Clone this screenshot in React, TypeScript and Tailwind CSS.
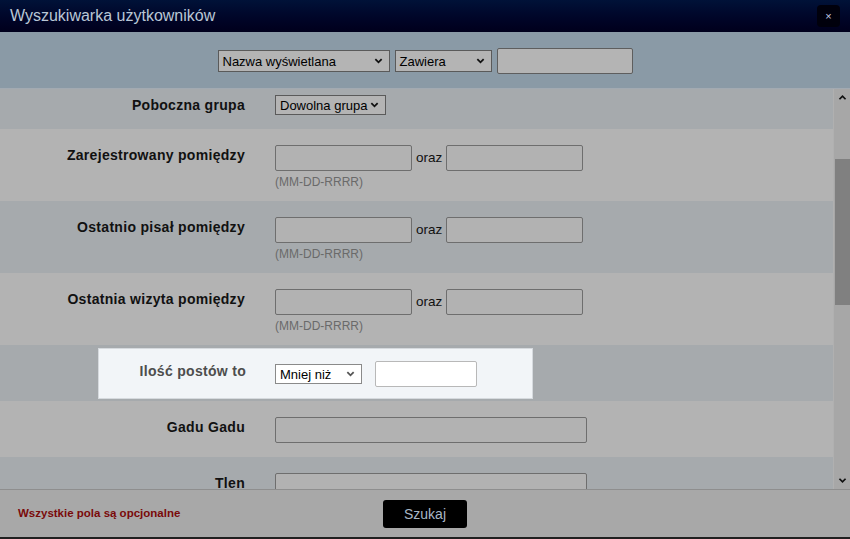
import React from 'react';

const font = { fontFamily: '"Liberation Sans", Arial, sans-serif' };

const Chevron: React.FC<{ className?: string }> = ({ className }) => (
  <svg viewBox="0 0 10 8" className={className} fill="none" stroke="currentColor" strokeWidth="2">
    <path d="M1.5 2l3.5 3.5L8.5 2" />
  </svg>
);

const Select: React.FC<{ label: string; className: string; light?: boolean }> = ({ label, className, light }) => (
  <div
    className={`flex items-center justify-between whitespace-nowrap border pl-1 pr-1.5 text-[13px] ${
      light ? 'bg-white border-[#8a8a8a] text-black' : 'bg-[#b4b4b4] border-[#5a5a5a] text-black'
    } ${className}`}
  >
    <span className="leading-none">{label}</span>
    <Chevron className={`w-[9px] h-[8px] shrink-0 ${light ? 'text-[#555]' : 'text-[#111]'}`} />
  </div>
);

const TextBox: React.FC<{ className: string }> = ({ className }) => (
  <div className={`h-[26px] border border-[#6e6e6e] rounded-[2px] bg-[#b2b2b2] ${className}`} />
);

const Row: React.FC<{ label: string; dark?: boolean; h: string; children: React.ReactNode }> = ({
  label,
  dark,
  h,
  children,
}) => (
  <div className={`flex ${h} ${dark ? 'bg-[#a6aaad]' : 'bg-[#b3b3b3]'}`}>
    <div className="w-[275px] shrink-0 pr-[30px] text-right font-bold text-[14px] tracking-[0.3px] text-[#111]">{label}</div>
    <div className="flex-1">{children}</div>
  </div>
);

const DateRange: React.FC = () => (
  <div className="pt-[16px]">
    <div className="flex items-center">
      <TextBox className="w-[137px]" />
      <span className="mx-[4px] text-[13.5px] text-[#111]">oraz</span>
      <TextBox className="w-[137px]" />
    </div>
    <div className="mt-[2px] text-[12px] text-[#6a6a6a]">(MM-DD-RRRR)</div>
  </div>
);

export default function App() {
  return (
    <div className="w-[850px] h-[539px] flex flex-col overflow-hidden bg-[#a8a8a8]" style={font}>
      {/* title bar */}
      <div className="h-[32px] shrink-0 flex items-center justify-between pl-[10px] pr-[10px] bg-gradient-to-b from-[#001238] to-[#00001c]">
        <span className="text-[16px] text-[#b9c7d6]">Wyszukiwarka użytkowników</span>
        <div className="w-[23px] h-[22px] rounded-[4px] bg-[#00000c] flex items-center justify-center text-[11px] leading-none text-[#c4cce4]">
          ×
        </div>
      </div>

      {/* filter bar */}
      <div className="h-[57px] shrink-0 flex items-center justify-center gap-[5px] bg-[#8a9aa6] border-b border-[#a2aab2] pt-[2px]">
        <Select label="Nazwa wyświetlana" className="w-[172px] h-[22px]" />
        <Select label="Zawiera" className="w-[97px] h-[22px]" />
        <div className="w-[136px] h-[26px] border border-[#5e5e5e] rounded-[2px] bg-[#b4b4b4]" />
      </div>

      {/* body */}
      <div className="h-[400px] shrink-0 flex">
        <div className="flex-1 overflow-hidden">
          <Row label="Poboczna grupa" dark h="h-[40px] pt-[6px]">
            <Select label="Dowolna grupa" className="w-[111px] h-[20px]" />
          </Row>
          <Row label="Zarejestrowany pomiędzy" h="h-[72px] [&>div:first-child]:pt-[16px]">
            <DateRange />
          </Row>
          <Row label="Ostatnio pisał pomiędzy" dark h="h-[72px] [&>div:first-child]:pt-[16px]">
            <DateRange />
          </Row>
          <Row label="Ostatnia wizyta pomiędzy" h="h-[72px] [&>div:first-child]:pt-[16px]">
            <DateRange />
          </Row>

          {/* highlighted row */}
          <div className="h-[56px] bg-[#a6aaad] pt-[3px]">
            <div className="ml-[98px] w-[435px] h-[51px] bg-[#f2f5f8] border border-[#d6dade] flex">
              <div className="w-[147px] shrink-0 text-right pt-[12px] font-bold text-[14px] tracking-[0.3px] text-[#4d4d4d]">Ilość postów to</div>
              <div className="pl-[29px] pt-[12px] flex items-start gap-[13px]">
                <Select label="Mniej niż" light className="w-[87px] h-[20px] mt-[3px]" />
                <div className="w-[102px] h-[26px] border border-[#b8b8b8] rounded-[2px] bg-white" />
              </div>
            </div>
          </div>

          <Row label="Gadu Gadu" h="h-[56px] [&>div:first-child]:pt-[16px]">
            <div className="pt-[16px]">
              <TextBox className="w-[312px]" />
            </div>
          </Row>
          <Row label="Tlen" dark h="h-[56px] [&>div:first-child]:pt-[16px]">
            <div className="pt-[16px]">
              <TextBox className="w-[312px]" />
            </div>
          </Row>
        </div>

        {/* scrollbar */}
        <div className="w-[17px] shrink-0 flex flex-col items-center bg-[#a7a7a7] border-l border-[#b0b0b0]">
          <svg viewBox="0 0 10 8" className="w-[9px] h-[7px] mt-[5px] text-[#111]" fill="none" stroke="currentColor" strokeWidth="2">
            <path d="M1.5 6l3.5-3.5L8.5 6" />
          </svg>
          <div className="w-[15px] h-[146px] mt-[58px] bg-[#808080]" />
          <div className="flex-1" />
          <Chevron className="w-[9px] h-[7px] mb-[5px] text-[#111]" />
        </div>
      </div>

      {/* footer */}
      <div className="flex-1 flex items-center border-t border-[#8e8e8e] border-b-2 border-b-[#202020] bg-[#a8a8a8] relative">
        <span className="pl-[18px] text-[11.5px] font-bold text-[#7a0a0a]">Wszystkie pola są opcjonalne</span>
        <div className="absolute left-[383px] top-[10px] w-[84px] h-[28px] rounded-[3px] bg-black flex items-center justify-center text-[14px] text-[#a8b8c8]">
          Szukaj
        </div>
      </div>
    </div>
  );
}
